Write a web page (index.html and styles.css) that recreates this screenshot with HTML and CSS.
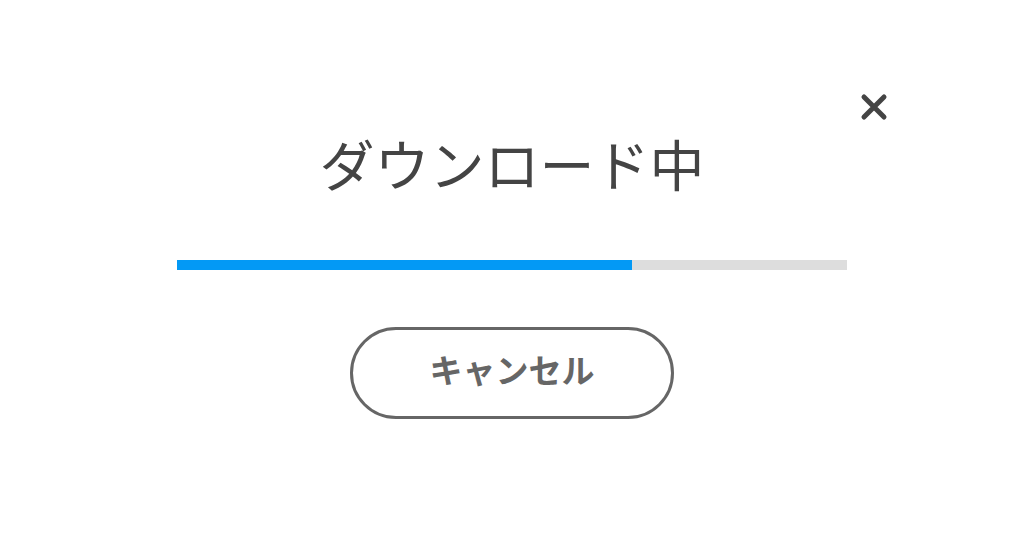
FILE: index.html
```html
<!DOCTYPE html>
<html lang="ja">
<head>
<meta charset="utf-8">
<link rel="stylesheet" href="styles.css">
</head>
<body>
<div class="dialog">
  <button class="close" aria-label="閉じる">
    <svg width="28" height="28" viewBox="0 0 28 28"><path d="M4 4L24 24M24 4L4 24" stroke="#444" stroke-width="5" stroke-linecap="round"/></svg>
  </button>
  <h1 class="title">ダウンロード中</h1>
  <div class="bar"><div class="fill" style="width:455px"></div></div>
  <button class="cancel">キャンセル</button>
</div>
</body>
</html>
```
FILE: styles.css
```css
html, body { margin: 0; padding: 0; background: #fff; }
body { font-family: "Noto Sans CJK JP", "Noto Sans", sans-serif; }
.dialog {
  position: relative;
  width: 1024px;
  height: 536px;
  display: flex;
  flex-direction: column;
  align-items: center;
  padding-top: 126px;
  box-sizing: border-box;
}
.close {
  position: absolute;
  left: 860px;
  top: 93px;
  width: 28px;
  height: 28px;
  padding: 0;
  border: 0;
  background: none;
  display: flex;
}
.title {
  margin: 0;
  font-size: 55px;
  font-weight: 400;
  line-height: 72px;
  color: #444;
  letter-spacing: 0;
}
.bar {
  margin-top: 62px;
  width: 670px;
  height: 10px;
  background: #ddd;
  display: flex;
}
.fill { background: #0399f5; height: 100%; }
.cancel {
  margin-top: 57px;
  width: 324px;
  height: 92px;
  border: 3px solid #666;
  border-radius: 46px;
  background: #fff;
  color: #666;
  font-family: "Noto Sans CJK JP", sans-serif;
  font-weight: 700;
  font-size: 33px;
  letter-spacing: 0;
  padding: 0 0 8px 0;
}
```
